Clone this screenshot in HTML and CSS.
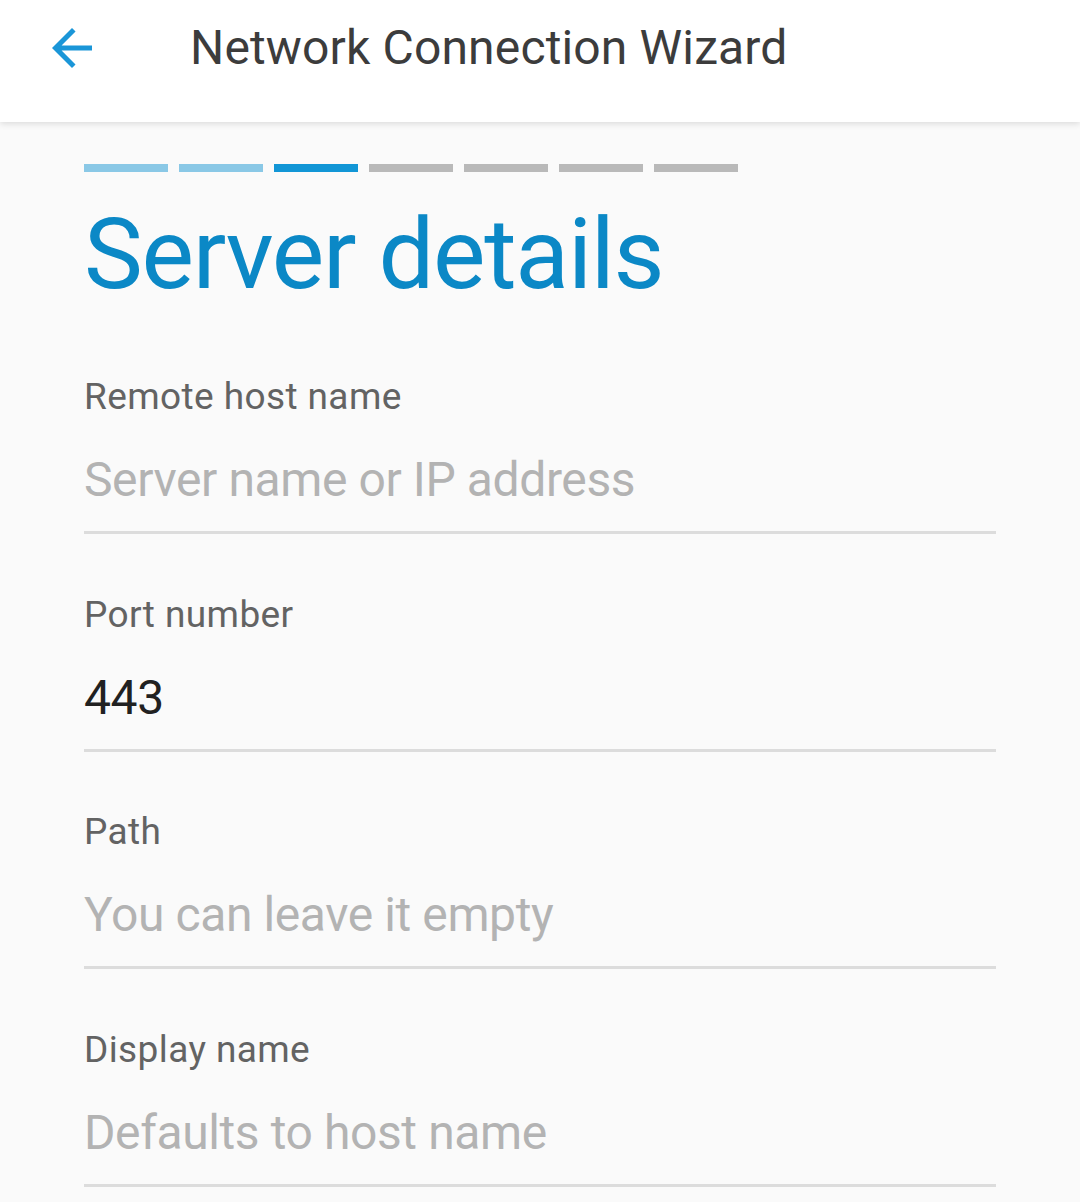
FILE: index.html
```html
<!DOCTYPE html>
<html lang="en">
<head>
<meta charset="utf-8">
<title>Network Connection Wizard</title>
<link rel="stylesheet" href="styles.css">
</head>
<body>
<header class="appbar">
  <button class="back" aria-label="Back">
    <svg viewBox="0 0 24 24" width="60" height="60"><path d="M20 11H7.83l5.59-5.59L12 4l-8 8 8 8 1.41-1.41L7.83 13H20v-2z" fill="#1a96d8"/></svg>
  </button>
  <h1 class="title">Network Connection Wizard</h1>
</header>
<main class="content">
  <div class="steps">
    <span class="step done"></span>
    <span class="step done"></span>
    <span class="step active"></span>
    <span class="step"></span>
    <span class="step"></span>
    <span class="step"></span>
    <span class="step"></span>
  </div>
  <h2 class="heading">Server details</h2>
  <div class="field">
    <div class="label">Remote host name</div>
    <div class="input placeholder">Server name or IP address</div>
  </div>
  <div class="field">
    <div class="label">Port number</div>
    <div class="input">443</div>
  </div>
  <div class="field">
    <div class="label">Path</div>
    <div class="input placeholder">You can leave it empty</div>
  </div>
  <div class="field">
    <div class="label">Display name</div>
    <div class="input placeholder">Defaults to host name</div>
  </div>
</main>
</body>
</html>
```

FILE: styles.css
```css
html, body {
  margin: 0;
  padding: 0;
}
body {
  background: #fafafa;
  font-family: Roboto, "Noto Sans", sans-serif;
  width: 1080px;
  height: 1202px;
  overflow: hidden;
}
.appbar {
  height: 122px;
  box-sizing: border-box;
  padding-top: 18px;
  background: #ffffff;
  display: flex;
  align-items: flex-start;
  box-shadow: 0 2px 6px rgba(0,0,0,0.12);
  position: relative;
  z-index: 1;
}
.back {
  border: 0;
  background: none;
  padding: 0;
  margin: 0 0 0 42px;
  width: 60px;
  height: 60px;
  display: flex;
}
.title {
  margin: 0 0 0 88px;
  font-weight: 400;
  font-size: 48px;
  line-height: 60px;
  color: #3c3c3c;
  letter-spacing: 0.15px;
}
.content {
  padding: 42px 84px 0 84px;
}
.steps {
  display: flex;
  gap: 11px;
}
.step {
  width: 84px;
  height: 8px;
  background: #b9b9b9;
}
.step.done {
  background: #8ac8e6;
}
.step.active {
  background: #1296d6;
}
.heading {
  margin: 22px 0 0 0;
  font-weight: 400;
  font-size: 99px;
  line-height: 120px;
  color: #0b88c6;
  letter-spacing: -1.3px;
}
.field {
  margin-top: 59px;
  border-bottom: 3px solid #dcdcdc;
  padding-bottom: 19px;
}
.field + .field {
  margin-top: 56.6px;
}
.label {
  font-size: 37px;
  line-height: 48px;
  color: #636363;
  letter-spacing: 0.4px;
}
.input {
  margin-top: 27px;
  font-size: 48px;
  line-height: 64px;
  color: #212121;
  letter-spacing: -0.4px;
}
.input.placeholder {
  color: #b3b3b3;
}
```
